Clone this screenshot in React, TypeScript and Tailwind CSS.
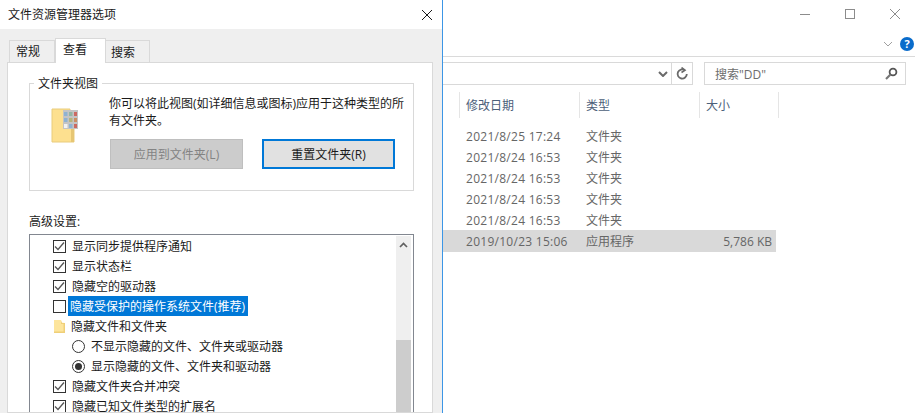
const FONT = "font-['Open_Sans','Noto_Sans_CJK_SC',sans-serif]";

function CheckBox({ checked }: { checked: boolean }) {
  return (
    <span className="w-[13px] h-[13px] border border-[#333333] bg-white shrink-0 flex items-center justify-center">
      {checked && (
        <svg width="11" height="11" viewBox="0 0 11 11" fill="none">
          <path d="M1 5.5L4 8.5L10 1.5" stroke="#555555" strokeWidth="1.3" />
        </svg>
      )}
    </span>
  );
}

function Radio({ checked }: { checked: boolean }) {
  return (
    <span className="w-[13px] h-[13px] rounded-full border border-[#333333] bg-white shrink-0 flex items-center justify-center">
      {checked && <span className="w-[7px] h-[7px] rounded-full bg-[#333333]" />}
    </span>
  );
}

function SmallFolder() {
  return (
    <svg width="11" height="13" viewBox="0 0 11 13" className="shrink-0 ml-px">
      <path d="M0 0H7V2.5L11 3V13H0Z" fill="#fde59c" />
      <path d="M7 0L8 3H11V13H0V11.5H9.5V4H7Z" fill="#efcf78" />
    </svg>
  );
}

function BigFolder() {
  return (
    <svg width="28" height="36" viewBox="0 0 28 36">
      <path d="M1 1H19V5H23V34H1Z" fill="#fde08f" stroke="#e9cc7c" />
      <path d="M20 10H23V34H20Z" fill="#e6c673" />
      <rect x="12" y="2" width="15" height="19" fill="#c4c4c4" />
      <rect x="13" y="4" width="3.5" height="4" fill="#8fb2d1" />
      <rect x="18" y="4" width="3.5" height="4" fill="#93b5a3" />
      <rect x="23" y="4" width="3" height="4" fill="#cc6a62" />
      <rect x="13" y="10" width="3.5" height="4" fill="#8fb2d1" />
      <rect x="18" y="10" width="3.5" height="4" fill="#b5b47d" />
      <rect x="23" y="10" width="3" height="4" fill="#cc8f62" />
      <rect x="13" y="16" width="3.5" height="4" fill="#f2f2f2" />
      <rect x="18" y="16" width="3.5" height="4" fill="#8fb2d1" />
      <rect x="23" y="16" width="3" height="4" fill="#cc6a62" />
    </svg>
  );
}

function SettingRow({ children, indent = 23 }: { children: React.ReactNode; indent?: number }) {
  return (
    <div
      className={`h-[20px] flex items-center gap-[6px] whitespace-nowrap [&>span:last-child]:pt-px ${indent === 23 ? "pl-[23px]" : "pl-[42px]"}`}
    >
      {children}
    </div>
  );
}

function Dialog() {
  return (
    <div className="w-[443px] shrink-0 h-full border-r border-[#3c96e6] flex flex-col text-[12px] text-[#1a1a1a]">
      <div className="h-[29px] shrink-0 bg-white pl-2 pr-[10px] flex items-center justify-between">
        <span>文件资源管理器选项</span>
        <svg width="10" height="10" viewBox="0 0 10 10" fill="none">
          <path d="M0 0L10 10M10 0L0 10" stroke="#1a1a1a" strokeWidth="1" />
        </svg>
      </div>
      <div className="flex-1 min-h-0 bg-[#efefef] pl-[7px] pr-[9px] pt-[9px] flex flex-col">
        <div className="flex items-end h-[24px] pl-[2px] shrink-0 relative z-10">
          <div className="w-[46px] h-[22px] border border-b-0 border-[#d9d9d9] flex items-center pl-[6px] pt-px">常规</div>
          <div className="w-[51px] h-[25px] -mb-px border border-b-0 border-[#d9d9d9] bg-white flex items-center pl-[7px] pb-[3px]">查看</div>
          <div className="w-[44px] h-[22px] border border-b-0 border-l-0 border-[#d9d9d9] flex items-center pl-[5px] pt-[2px]">搜索</div>
        </div>
        <div className="flex-1 min-h-0 bg-white border border-[#d9d9d9] pl-[21px] pr-[18px] pt-[20px] overflow-hidden">
          <div className="relative h-[108px] border border-[#d9d9d9] flex">
            <span className="absolute left-[4px] -top-[9px] bg-white px-[4px] leading-[18px]">文件夹视图</span>
            <div className="pl-[21px] pt-[24px] w-[79px] shrink-0">
              <BigFolder />
            </div>
            <div className="flex flex-col pt-[11px]">
              <p className="leading-[17px] whitespace-nowrap">
                你可以将此视图(如详细信息或图标)应用于这种类型的所<br />有文件夹。
              </p>
              <div className="flex gap-[19px] mt-[10px] ml-px">
                <div className="w-[133px] h-[30px] bg-[#cccccc] border border-[#bfbfbf] text-[#838383] flex items-center justify-center pt-[2px]">
                  应用到文件夹(L)
                </div>
                <div className="w-[133px] h-[30px] bg-[#e1e1e1] border-2 border-[#0078d7] flex items-center justify-center pt-[2px]">
                  重置文件夹(R)
                </div>
              </div>
            </div>
          </div>
          <div className="mt-[22px] leading-[18px] h-[17px]">高级设置:</div>
          <div className="mt-[4px] h-[300px] border border-[#828790] flex">
            <div className="flex-1 pt-[1px] min-w-0">
              <SettingRow>
                <CheckBox checked />
                <span>显示同步提供程序通知</span>
              </SettingRow>
              <SettingRow>
                <CheckBox checked />
                <span>显示状态栏</span>
              </SettingRow>
              <SettingRow>
                <CheckBox checked />
                <span>隐藏空的驱动器</span>
              </SettingRow>
              <SettingRow>
                <CheckBox checked={false} />
                <span className="bg-[#0078d7] text-white h-[20px] leading-[20px] w-[180px] -ml-[4px] pl-[2px]">
                  隐藏受保护的操作系统文件(推荐)
                </span>
              </SettingRow>
              <SettingRow>
                <SmallFolder />
                <span>隐藏文件和文件夹</span>
              </SettingRow>
              <SettingRow indent={42}>
                <Radio checked={false} />
                <span>不显示隐藏的文件、文件夹或驱动器</span>
              </SettingRow>
              <SettingRow indent={42}>
                <Radio checked />
                <span>显示隐藏的文件、文件夹和驱动器</span>
              </SettingRow>
              <SettingRow>
                <CheckBox checked />
                <span>隐藏文件夹合并冲突</span>
              </SettingRow>
              <SettingRow>
                <CheckBox checked />
                <span>隐藏已知文件类型的扩展名</span>
              </SettingRow>
            </div>
            <div className="w-[15px] mt-px mr-[2px] bg-[#efefef] flex flex-col shrink-0">
              <div className="h-[17px] flex items-center justify-center">
                <svg width="9" height="6" viewBox="0 0 9 6" fill="none">
                  <path d="M1 5L4.5 1.5L8 5" stroke="#606060" strokeWidth="1.7" />
                </svg>
              </div>
              <div className="h-[87px]" />
              <div className="flex-1 bg-[#cdcdcd]" />
            </div>
          </div>
        </div>
      </div>
    </div>
  );
}

const files = [
  { date: "2021/8/25 17:24", type: "文件夹", size: "" },
  { date: "2021/8/24 16:53", type: "文件夹", size: "" },
  { date: "2021/8/24 16:53", type: "文件夹", size: "" },
  { date: "2021/8/24 16:53", type: "文件夹", size: "" },
  { date: "2021/8/24 16:53", type: "文件夹", size: "" },
  { date: "2019/10/23 15:06", type: "应用程序", size: "5,786 KB" },
];

function Explorer() {
  return (
    <div className="flex-1 min-w-0 bg-white flex flex-col text-[12px]">
      <div className="h-[28px] shrink-0 flex items-center justify-end pr-[15px] gap-[35px]">
        <span className="w-[10px] h-px bg-[#8c8c8c]" />
        <span className="w-[10px] h-[10px] border border-[#8c8c8c]" />
        <svg width="10" height="10" viewBox="0 0 10 10" fill="none">
          <path d="M0 0L10 10M10 0L0 10" stroke="#8c8c8c" strokeWidth="1" />
        </svg>
      </div>
      <div className="h-[29px] shrink-0 border-b border-[#dadada] flex items-start justify-end pr-px pt-[9px] gap-[7px]">
        <svg width="10" height="6" viewBox="0 0 10 6" fill="none" className="mt-[4px]">
          <path d="M1 1L5 5L9 1" stroke="#a0a0a0" strokeWidth="1" />
        </svg>
        <span className="w-[14px] h-[14px] rounded-full bg-[#0a6ccb] text-white text-[11px] font-bold leading-[14px] text-center">?</span>
      </div>
      <div className="flex h-[23px] mt-[5px] shrink-0 pr-[9px]">
        <div className="w-[229px] border-y border-r border-[#d9d9d9] flex items-center justify-end pr-[3px]">
          <svg width="10" height="6" viewBox="0 0 10 6" fill="none">
            <path d="M1 1L5 5L9 1" stroke="#6a6a6a" strokeWidth="2" />
          </svg>
        </div>
        <div className="w-[21px] border-y border-r border-[#d9d9d9] flex items-center justify-center">
          <svg width="12" height="13" viewBox="0 0 12 13" fill="none">
            <path d="M8.8 3.2A4.6 4.6 0 1 0 10.8 7" stroke="#6a6a6a" strokeWidth="1.8" />
            <path d="M5.5 0.5L9 3.2L5.5 5.5" stroke="#6a6a6a" strokeWidth="1.6" />
          </svg>
        </div>
        <div className="ml-[11px] flex-1 border border-[#d9d9d9] flex items-center justify-between pl-[10px] pr-[7px] text-[#6d6d6d]">
          <span className="pt-[2px]">搜索"DD"</span>
          <svg width="13" height="13" viewBox="0 0 13 13" fill="none">
            <circle cx="8" cy="5" r="3.4" stroke="#555555" strokeWidth="1.8" />
            <path d="M5.5 7.5L1 12" stroke="#777777" strokeWidth="2.2" />
          </svg>
        </div>
      </div>
      <div className="flex h-[26px] mt-[7px] pl-[16px] shrink-0 text-[#4c607a]">
        <div className="w-[120px] border-l border-[#e5e5e5] pl-[6px] leading-[28px]">修改日期</div>
        <div className="w-[120px] border-l border-[#e5e5e5] pl-[6px] leading-[28px]">类型</div>
        <div className="w-[80px] border-x border-[#e5e5e5] pl-[6px] leading-[28px]">大小</div>
      </div>
      <div className="pt-[7px] text-[#666666]">
        {files.map((f, i) => (
          <div
            key={i}
            className={`flex w-[333px] pl-[23px] pr-[4px] pt-[2px] items-center ${f.size ? "bg-[#d9d9d9] h-[22px]" : "h-[21px]"}`}
          >
            <span className="w-[120px] tracking-[0.27px]">{f.date}</span>
            <span className="w-[100px]">{f.type}</span>
            <span className="flex-1 text-right">{f.size}</span>
          </div>
        ))}
      </div>
    </div>
  );
}

export default function App() {
  return (
    <div className={`w-[915px] h-[413px] overflow-hidden flex bg-white ${FONT}`}>
      <Dialog />
      <Explorer />
    </div>
  );
}
